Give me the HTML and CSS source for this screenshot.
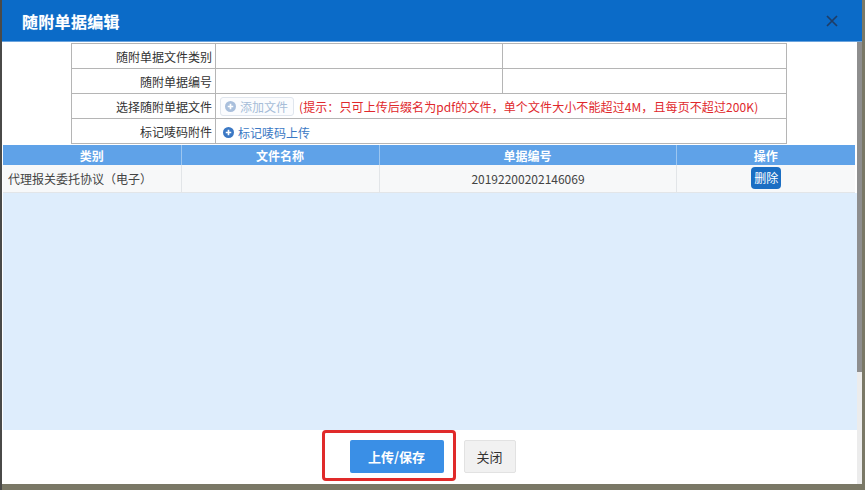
FILE: index.html
```html
<!DOCTYPE html>
<html lang="zh-CN">
<head>
<meta charset="utf-8">
<title>随附单据编辑</title>
<link rel="stylesheet" href="styles.css">
</head>
<body>
<div class="page">
  <div class="dialog">
    <div class="titlebar">
      <span class="title">随附单据编辑</span>
      <svg class="close" width="12" height="12" viewBox="0 0 12 12"><path d="M1 1L11 11M11 1L1 11" stroke="#1f3d66" stroke-width="1.7" fill="none"/></svg>
    </div>
    <div class="main">
      <div class="content">
        <table class="form">
          <tr>
            <td class="label">随附单据文件类别</td>
            <td class="val half"></td>
            <td class="val"></td>
          </tr>
          <tr>
            <td class="label">随附单据编号</td>
            <td class="val half"></td>
            <td class="val"></td>
          </tr>
          <tr>
            <td class="label">选择随附单据文件</td>
            <td class="val" colspan="2">
              <span class="addbtn"><svg width="11" height="11" viewBox="0 0 12 12"><circle cx="6" cy="6" r="6" fill="#a9bfdc"/><path d="M6 3V9M3 6H9" stroke="#fff" stroke-width="1.8"/></svg>添加文件</span><span class="hint">(提示：只可上传后缀名为pdf的文件，单个文件大小不能超过4M，且每页不超过200K)</span>
            </td>
          </tr>
          <tr>
            <td class="label">标记唛码附件</td>
            <td class="val" colspan="2">
              <span class="marklink"><svg width="11" height="11" viewBox="0 0 12 12"><circle cx="6" cy="6" r="6" fill="#3b78c4"/><path d="M6 3V9M3 6H9" stroke="#fff" stroke-width="1.8"/></svg>标记唛码上传</span>
            </td>
          </tr>
        </table>
        <table class="grid">
          <thead>
            <tr>
              <th class="c1">类别</th>
              <th class="c2">文件名称</th>
              <th class="c3">单据编号</th>
              <th class="c4">操作</th>
            </tr>
          </thead>
          <tbody>
            <tr>
              <td>代理报关委托协议（电子）</td>
              <td></td>
              <td class="center">20192200202146069</td>
              <td class="center"><span class="delbtn">删除</span></td>
            </tr>
          </tbody>
        </table>
        <div class="empty"></div>
        <div class="footer">
          <button class="btn primary">上传/保存</button>
          <button class="btn plain">关闭</button>
          <div class="annot"></div>
        </div>
      </div>
      <div class="scrollbar"><div class="thumb"></div></div>
    </div>
  </div>
</div>
</body>
</html>
```

FILE: styles.css
```css
* { box-sizing: border-box; }
html, body { margin: 0; padding: 0; }
body {
  width: 865px;
  height: 490px;
  overflow: hidden;
  background: #6f6d5f;
  font-family: "Noto Sans CJK SC", "Liberation Sans", sans-serif;
  font-size: 12px;
  color: #333;
}
.page {
  width: 865px;
  height: 490px;
  padding-left: 2px;
  background: linear-gradient(to right, #4a4a48 0, #4a4a48 2px, #7a7866 2px);
}
.dialog {
  width: 860px;
  height: 484px;
  display: flex;
  flex-direction: column;
  background: #fff;
}
.titlebar {
  height: 42px;
  flex: none;
  background: #0b6bc8;
  display: flex;
  align-items: center;
  justify-content: space-between;
  padding: 0 24px 0 20px;
  border-bottom: 1px solid #6aa3dd;
}
.title {
  color: #fff;
  font-size: 16px;
  font-weight: bold;
  letter-spacing: 0.3px;
  text-shadow: 0 0 1px rgba(255,255,255,0.4);
}
.close { display: block; }
.main {
  flex: 1;
  display: flex;
  min-height: 0;
}
.content {
  width: 855px;
  display: flex;
  flex-direction: column;
  background: #fff;
}
.scrollbar {
  width: 5px;
  background: #ececec;
}
.thumb {
  height: 330px;
  background: #8e8e8e;
}
.form {
  border-collapse: collapse;
  margin: 1px 0 0 69px;
  width: 716px;
  table-layout: fixed;
}
.form td {
  border: 1px solid #b5b5b5;
  height: 25px;
  padding: 0 4px;
  white-space: nowrap;
}
.form .label {
  width: 144px;
  text-align: right;
  color: #333;
  padding-right: 3px;
}
.form .half { width: 287px; }
.addbtn {
  display: inline-flex;
  align-items: center;
  gap: 4px;
  height: 19px;
  padding: 0 5px 0 4px;
  border: 1px solid #e0e6ee;
  border-radius: 3px;
  color: #a6bcd8;
  background: #fbfcfe;
  vertical-align: middle;
}
.hint {
  color: #e0282c;
  margin-left: 5px;
  letter-spacing: 0.1px;
  vertical-align: middle;
}
.marklink {
  display: inline-flex;
  align-items: center;
  gap: 4px;
  color: #3b78c4;
  padding-left: 3px;
  vertical-align: middle;
}
.grid {
  border-collapse: collapse;
  width: 852px;
  margin: 1px 0 0 1px;
  table-layout: fixed;
}
.grid th {
  background: #5fa2e8;
  color: #fff;
  font-weight: bold;
  height: 20px;
  padding: 0;
  border-left: 1px solid #9cc6f0;
  text-align: center;
}
.grid th:first-child { border-left: none; }
.grid .c1 { width: 178px; }
.grid .c2 { width: 198px; }
.grid .c3 { width: 297px; }
.grid .c4 { width: 179px; }
.grid td {
  background: #f7f8f9;
  height: 27px;
  padding: 0 4px 0 5px;
  border: 1px solid #e2e5e8;
  border-top: none;
  color: #444;
}
.grid td:first-child { border-left: none; }
.grid td:last-child { border-right: none; }
.grid .center { text-align: center; }
.delbtn {
  display: inline-block;
  height: 22px;
  line-height: 22px;
  padding: 0 3px;
  background: #1b6ec3;
  color: #fff;
  border-radius: 4px;
  font-size: 12px;
  vertical-align: middle;
}
.empty {
  flex: 1;
  margin-left: 1px;
  background: #deedfc;
}
.footer {
  position: relative;
  height: 54px;
  flex: none;
  display: flex;
  align-items: center;
  justify-content: center;
  gap: 20px;
  padding: 0 0 2px 6px;
}
.btn {
  font-family: inherit;
  font-size: 13px;
  height: 33px;
  border-radius: 2px;
  cursor: pointer;
}
.primary {
  width: 94px;
  background: #3a8fe6;
  color: #fff;
  font-weight: bold;
  border: none;
}
.plain {
  width: 52px;
  background: #f1f1f1;
  color: #333;
  border: 1px solid #e2e2e2;
}
.annot {
  position: absolute;
  left: 320px;
  top: 0;
  width: 134px;
  height: 51px;
  border: 3px solid #e02a2a;
  border-radius: 4px;
}
```
